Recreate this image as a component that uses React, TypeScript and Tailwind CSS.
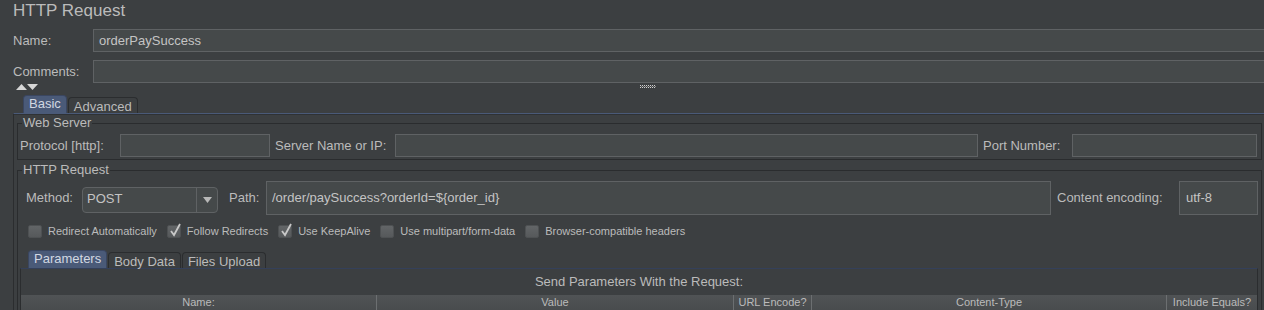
import React from 'react'

function CheckBox({ checked, label }: { checked?: boolean; label: string }) {
  return (
    <div className="flex items-center mr-[10px]">
      <div className="relative w-[14px] h-[13px] rounded-[2px] border border-[#4e5153] bg-gradient-to-b from-[#626567] to-[#56595b]">
        {checked && (
          <svg className="absolute left-[1px] top-[-3px] overflow-visible" width="13" height="14" viewBox="0 0 13 14">
            <path d="M2 8 L5 12 L11 1" fill="none" stroke="#c8c8c8" strokeWidth="1.8" />
          </svg>
        )}
      </div>
      <span className="ml-[6px] text-[11px] leading-[14px]">{label}</span>
    </div>
  )
}

function Tab({ label, active }: { label: string; active?: boolean }) {
  return (
    <div
      className={
        active
          ? 'h-[18px] px-[5px] rounded-t-[4px] border border-b-0 border-[#3a4660] bg-[#4a5a78] text-[#d2d8e2] text-[13px] leading-[14px] pt-[1px] mr-[1px]'
          : 'h-[16px] mt-[1px] px-[5px] rounded-t-[4px] border border-b-0 border-[#2b2d2f] bg-[#3c3f41] text-[13px] leading-[16px] pt-[1px] mr-[1px]'
      }
    >
      {label}
    </div>
  )
}

export default function App() {
  const cols = [
    { name: 'Name:', w: 'w-[356px]' },
    { name: 'Value', w: 'w-[357px]' },
    { name: 'URL Encode?', w: 'w-[78px]' },
    { name: 'Content-Type', w: 'w-[355px]' },
    { name: 'Include Equals?', w: 'flex-1' },
  ]

  return (
    <div className="w-[1264px] h-[310px] overflow-hidden bg-[#3c3f41] text-[#bbbbbb] font-['Liberation_Sans',Arial,sans-serif]">
      <div className="h-[29px] pl-[13px] text-[17px] leading-[22px]">HTTP Request</div>

      <div className="flex items-center h-[23px]">
        <div className="w-[93px] shrink-0 pl-[13px] text-[13px]">Name:</div>
        <div className="w-[1180px] h-[23px] shrink-0 border border-[#5f6264] bg-[#45494a] pl-[5px] text-[13px] leading-[21px] text-[#c4c4c4]">
          orderPaySuccess
        </div>
      </div>

      <div className="flex items-center h-[23px] mt-[8px]">
        <div className="w-[93px] shrink-0 pl-[13px] text-[13px]">Comments:</div>
        <div className="w-[1180px] h-[23px] shrink-0 border border-[#5f6264] bg-[#45494a]"></div>
      </div>

      <div className="relative h-[12px]">
        <svg className="absolute left-[16px] top-[1px]" width="23" height="6" viewBox="0 0 23 6">
          <path d="M0 6 L5.5 0 L11 6 Z" fill="#d6d6d6" />
          <path d="M11 0 L22 0 L16.5 6 Z" fill="#d6d6d6" />
        </svg>
        <svg className="absolute left-[640px] top-[2px]" width="16" height="4" viewBox="0 0 16 4">
          {[0, 2, 4, 6, 8, 10, 12, 14].map((x) => (
            <rect key={'a' + x} x={x} y={0} width="1" height="1" fill="#cfcfcf" />
          ))}
          {[1, 3, 5, 7, 9, 11, 13, 15].map((x) => (
            <rect key={'b' + x} x={x} y={1} width="1" height="1" fill="#8a8a8a" />
          ))}
          {[0, 2, 4, 6, 8, 10, 12, 14].map((x) => (
            <rect key={'c' + x} x={x} y={2} width="1" height="1" fill="#cfcfcf" />
          ))}
        </svg>
      </div>

      <div className="flex items-end h-[18px] pl-[23px]">
        <Tab label="Basic" active />
        <Tab label="Advanced" />
      </div>

      <div className="ml-[13px] border-l border-t border-l-[#2b2d2f] border-t-[#4a5a78] h-[200px]">
        <div className="h-[1px] bg-[#2f3235]"></div>

        <fieldset className="ml-[3px] mr-[2px] border border-[#2a2c2e] pb-[2px]">
          <legend className="ml-[4px] px-[1px] text-[13px] leading-[16px]">Web Server</legend>
          <div className="flex items-center pl-[2px] pr-[4px] mt-[3px] h-[23px] text-[13px]">
            <div className="w-[100px] shrink-0">Protocol [http]:</div>
            <div className="w-[150px] h-[23px] shrink-0 border border-[#5f6264] bg-[#45494a]"></div>
            <div className="ml-[5px] w-[120px] shrink-0">Server Name or IP:</div>
            <div className="flex-1 h-[23px] border border-[#5f6264] bg-[#45494a]"></div>
            <div className="ml-[5px] w-[89px] shrink-0">Port Number:</div>
            <div className="w-[185px] h-[23px] shrink-0 border border-[#5f6264] bg-[#45494a]"></div>
          </div>
        </fieldset>

        <fieldset className="ml-[3px] mr-[2px] mt-[2px] border border-[#2a2c2e] h-[160px]">
          <legend className="ml-[4px] px-[1px] text-[13px] leading-[16px]">HTTP Request</legend>
          <div className="flex items-center pl-[8px] pr-[3px] mt-[3px] h-[34px] text-[13px]">
            <div className="w-[56px] shrink-0">Method:</div>
            <div className="flex w-[136px] h-[26px] mt-[3px] shrink-0 rounded-[4px] border border-[#5f6264] bg-[#45494a]">
              <div className="flex-1 pl-[4px] leading-[22px] text-[#c4c4c4]">POST</div>
              <div className="w-[21px] border-l border-[#5f6264] flex items-center justify-center">
                <svg width="9" height="6" viewBox="0 0 9 6">
                  <path d="M0 0 L9 0 L4.5 6 Z" fill="#b8b8b8" />
                </svg>
              </div>
            </div>
            <div className="ml-[11px] w-[37px] shrink-0">Path:</div>
            <div className="flex-1 h-[34px] border border-[#5f6264] bg-[#45494a] pl-[5px] leading-[32px] text-[#c4c4c4]">
              /order/paySuccess?orderId=${'{'}order_id{'}'}
            </div>
            <div className="ml-[6px] w-[122px] shrink-0">Content encoding:</div>
            <div className="w-[79px] h-[34px] shrink-0 border border-[#5f6264] bg-[#45494a] pl-[6px] leading-[32px] text-[#c4c4c4]">
              utf-8
            </div>
          </div>

          <div className="flex items-center h-[16px] mt-[8px] pl-[10px]">
            <CheckBox label="Redirect Automatically" />
            <CheckBox label="Follow Redirects" checked />
            <CheckBox label="Use KeepAlive" checked />
            <CheckBox label="Use multipart/form-data" />
            <CheckBox label="Browser-compatible headers" />
          </div>

          <div className="flex items-end h-[17px] mt-[12px] pl-[10px]">
            <Tab label="Parameters" active />
            <Tab label="Body Data" />
            <Tab label="Files Upload" />
          </div>

          <div className="ml-[2px] mr-[3px] border-t border-l border-r border-t-[#34405a] border-l-[#2b2d2f] border-r-[#2b2d2f] h-[60px]">
            <div className="pt-[5px] text-center text-[13px] leading-[16px]">Send Parameters With the Request:</div>
            <div className="flex mt-[5px] h-[16px] bg-gradient-to-b from-[#505355] to-[#484b4d] text-[11px] leading-[15px]">
              {cols.map((c, i) => (
                <div
                  key={c.name}
                  className={c.w + ' shrink-0 text-center ' + (i < cols.length - 1 ? 'border-r border-[#6c6f71]' : '')}
                >
                  {c.name}
                </div>
              ))}
            </div>
          </div>
        </fieldset>
      </div>
    </div>
  )
}
